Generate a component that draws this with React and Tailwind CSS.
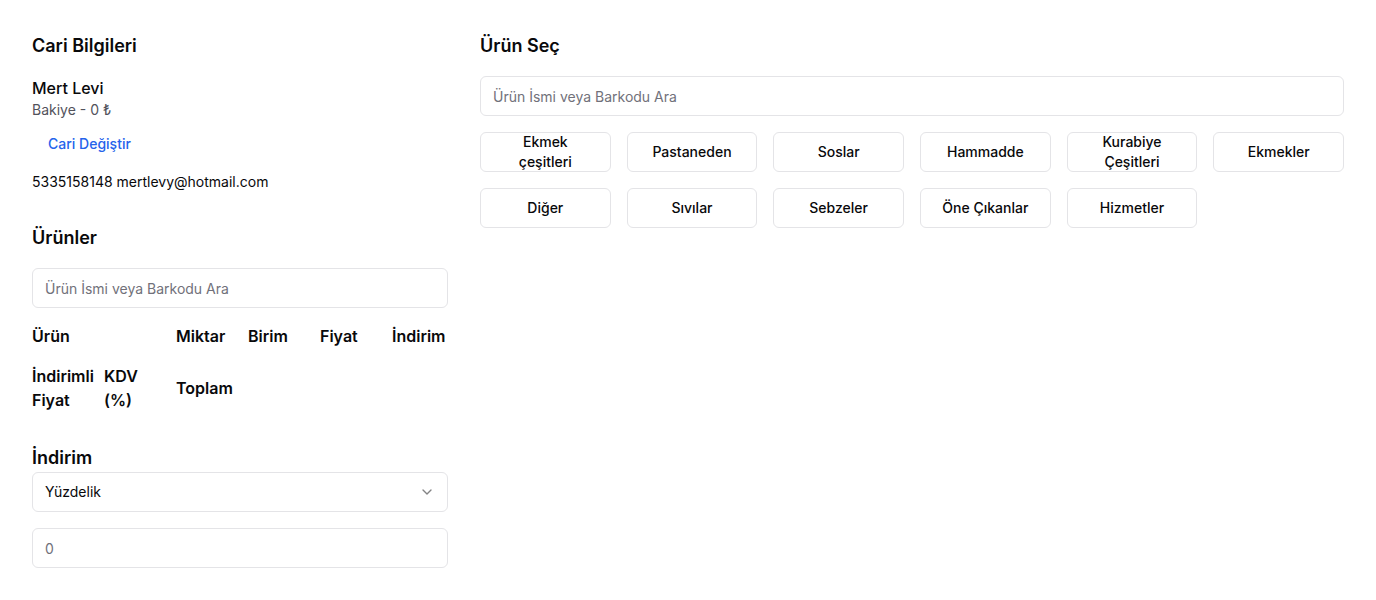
import React from 'react';
import { ChevronDown } from 'lucide-react';

const categories = [
  'Ekmek çeşitleri',
  'Pastaneden',
  'Soslar',
  'Hammadde',
  'Kurabiye Çeşitleri',
  'Ekmekler',
  'Diğer',
  'Sıvılar',
  'Sebzeler',
  'Öne Çıkanlar',
  'Hizmetler',
];

const SearchInput = ({ placeholder }) => (
  <input
    type="text"
    placeholder={placeholder}
    className="h-10 w-full rounded-md border border-[#e4e4e7] bg-white px-3 text-sm text-[#09090b] placeholder:text-[#71717a] outline-none"
  />
);

export default function App() {
  return (
    <div
      className="min-h-screen bg-white p-8 text-[#09090b]"
      style={{ fontFamily: 'Inter, "Noto Sans", sans-serif' }}
    >
      <div className="flex gap-8">
        {/* Sol kolon */}
        <div className="flex w-[416px] shrink-0 flex-col">
          <h2 className="text-lg font-semibold leading-7">Cari Bilgileri</h2>
          <div className="mt-4">
            <p className="text-base font-medium leading-6">Mert Levi</p>
            <p className="text-sm leading-5 text-[#52525b]">Bakiye - 0 ₺</p>
          </div>
          <button className="mt-[6px] flex h-9 w-fit items-center rounded-md px-4 text-sm font-medium text-[#2563eb]">
            Cari Değiştir
          </button>
          <p className="mt-[10px] text-sm leading-5">5335158148 mertlevy@hotmail.com</p>

          <h2 className="mt-8 text-lg font-semibold leading-7">Ürünler</h2>
          <div className="mt-4">
            <SearchInput placeholder="Ürün İsmi veya Barkodu Ara" />
          </div>

          <div className="mt-4 grid grid-cols-[144px_72px_72px_72px_1fr] items-center text-base font-semibold leading-6">
            <span>Ürün</span>
            <span>Miktar</span>
            <span>Birim</span>
            <span>Fiyat</span>
            <span className="whitespace-nowrap">İndirim</span>
          </div>
          <div className="mt-4 grid grid-cols-[72px_72px_1fr] items-center text-base font-semibold leading-6">
            <span className="pr-2">İndirimli Fiyat</span>
            <span className="pr-2">KDV (%)</span>
            <span>Toplam</span>
          </div>

          <h2 className="mt-8 text-lg font-semibold leading-7">İndirim</h2>
          <button className="flex h-10 w-full items-center justify-between rounded-md border border-[#e4e4e7] bg-white px-3 text-sm">
            <span>Yüzdelik</span>
            <ChevronDown className="h-4 w-4 opacity-50" />
          </button>
          <div className="mt-4">
            <SearchInput placeholder="0" />
          </div>
        </div>

        {/* Sağ kolon */}
        <div className="flex w-[864px] shrink-0 flex-col">
          <h2 className="text-lg font-semibold leading-7">Ürün Seç</h2>
          <div className="mt-4">
            <SearchInput placeholder="Ürün İsmi veya Barkodu Ara" />
          </div>
          <div className="mt-4 grid grid-cols-6 gap-4">
            {categories.map((c) => (
              <button
                key={c}
                className="flex h-10 items-center justify-center rounded-md border border-[#e4e4e7] bg-white px-4 text-center text-sm font-medium leading-5"
              >
                {c}
              </button>
            ))}
          </div>
        </div>
      </div>
    </div>
  );
}
